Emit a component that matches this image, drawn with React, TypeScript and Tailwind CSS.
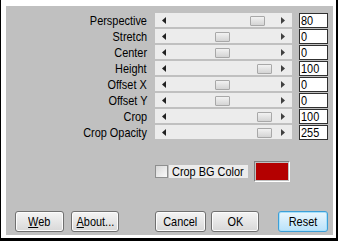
import React from "react";

const font = { fontFamily: "'Liberation Sans', Arial, sans-serif" };

const rows = [
  { label: "Perspective", value: "80", thumb: 95 },
  { label: "Stretch", value: "0", thumb: 60 },
  { label: "Center", value: "0", thumb: 60 },
  { label: "Height", value: "100", thumb: 102 },
  { label: "Offset X", value: "0", thumb: 60 },
  { label: "Offset Y", value: "0", thumb: 60 },
  { label: "Crop", value: "100", thumb: 102 },
  { label: "Crop Opacity", value: "255", thumb: 102 },
];

function N({ children, origin }: { children: React.ReactNode; origin: "left" | "right" | "center" }) {
  const o = origin === "left" ? "origin-left" : origin === "right" ? "origin-right" : "origin-center";
  return <span className={`inline-block whitespace-nowrap scale-x-[0.84] ${o}`}>{children}</span>;
}

function Btn({ children, w, primary }: { children: React.ReactNode; w: string; primary?: boolean }) {
  return (
    <div
      className={`${w} h-[21px] rounded-[3px] border flex items-center justify-center text-[13px] leading-none text-black ${
        primary
          ? "border-[#3c9fd8] bg-gradient-to-b from-[#eaf6fd] to-[#b9e2fb] shadow-[inset_0_0_0_1px_#a8e0fb]"
          : "border-[#707070] bg-gradient-to-b from-[#f4f4f4] to-[#d8d8d8] shadow-[inset_0_0_0_1px_#fcfcfc]"
      }`}
    >
      <N origin="center">{children}</N>
    </div>
  );
}

export default function App() {
  return (
    <div className="w-[338px] h-[241px] bg-black" style={font}>
      <div className="ml-[1px] w-[335px] h-[238px] bg-white pl-[5px] pt-[6px]">
        <div className="w-[327px] h-[229px] bg-[#c0c0c0] flex flex-col">
          <div className="pt-[6px] flex flex-col">
            {rows.map((r) => (
              <div key={r.label} className="h-[16px] flex items-center">
                <div className="w-[142px] text-right text-[13px] leading-none text-black pr-[1px]">
                  <N origin="right">{r.label}</N>
                </div>
                <div className="ml-[7px] w-[137px] h-[14px] bg-[#ececec] relative flex items-center justify-between px-[7px]">
                  <svg width="4" height="7" viewBox="0 0 4 7"><path d="M4 0 L0 3.5 L4 7 Z" fill="#202020" /></svg>
                  <svg width="4" height="7" viewBox="0 0 4 7"><path d="M0 0 L4 3.5 L0 7 Z" fill="#404040" /></svg>
                  <div
                    className="absolute top-[3px] w-[15px] h-[10px] border border-[#a8a8a8] rounded-[1px] bg-gradient-to-b from-[#f2f2f2] to-[#d4d4d4]"
                    style={{ left: r.thumb }}
                  />
                </div>
                <div className="ml-[7px] w-[29px] h-[15px] bg-white border border-[#303030] text-[13px] leading-none text-black pl-[1px] flex items-center">
                  <N origin="left">{r.value}</N>
                </div>
              </div>
            ))}
          </div>
          <div className="mt-[21px] flex items-center h-[21px]">
            <div className="ml-[149px] w-[13px] h-[13px] border border-[#8e8f8f] bg-gradient-to-br from-[#d8d8d8] to-[#fafafa]" />
            <div className="ml-[1px] w-[79px] h-[13px] bg-[#ececec] text-[13px] leading-none text-black flex items-center pl-[3px]">
              <N origin="left">Crop BG Color</N>
            </div>
            <div className="ml-[6px] w-[36px] h-[21px] border border-t-[#808080] border-l-[#808080] border-b-white border-r-white p-[1px]">
              <div className="w-full h-full bg-[#b40000]" />
            </div>
          </div>
          <div className="mt-[29px] flex items-center">
            <div className="ml-[9px]">
              <Btn w="w-[49px]"><span className="underline">W</span>eb</Btn>
            </div>
            <div className="ml-[7px]">
              <Btn w="w-[48px]"><span className="underline">A</span>bout...</Btn>
            </div>
            <div className="ml-[36px]">
              <Btn w="w-[51px]">Cancel</Btn>
            </div>
            <div className="ml-[5px]">
              <Btn w="w-[48px]">OK</Btn>
            </div>
            <div className="ml-[19px]">
              <Btn w="w-[50px]" primary>Reset</Btn>
            </div>
          </div>
        </div>
      </div>
    </div>
  );
}
